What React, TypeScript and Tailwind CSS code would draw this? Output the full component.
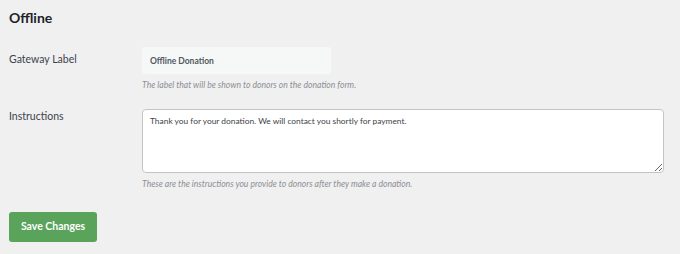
import React from "react";

export default function App() {
  return (
    <div className="min-h-[254px] w-[680px] bg-[#f0f0f1] px-[9px] pt-[9px] font-['Lato',sans-serif] text-[#3c434a]">
      <h2 className="text-[14px] leading-[18px] font-bold text-[#1d2327]">Offline</h2>

      <div className="mt-[20px] grid grid-cols-[133px_1fr]">
        {/* Gateway Label */}
        <label className="pt-[5px] text-[10.5px] leading-[14px]">Gateway Label</label>
        <div>
          <input
            readOnly
            value="Offline Donation"
            className="block h-[27px] w-[189px] rounded-[3px] bg-[#f6f7f7] px-[8px] text-[8.5px] font-bold text-[#50575e] outline-none"
          />
          <p className="mt-[5px] text-[8.6px] leading-[12px] italic text-[#8c8f94]">
            The label that will be shown to donors on the donation form.
          </p>
        </div>

        {/* Instructions */}
        <label className="mt-[18px] text-[10.5px] leading-[14px]">Instructions</label>
        <div className="mt-[18px]">
          <textarea
            readOnly
            defaultValue="Thank you for your donation. We will contact you shortly for payment."
            className="block h-[64px] w-[522px] rounded-[4px] border border-[#c3c4c7] bg-white px-[7px] pt-[4px] pb-[6px] text-[8.4px] leading-[14px] text-[#3c434a] outline-none"
          />
          <p className="mt-[5px] text-[8.6px] leading-[12px] italic text-[#8c8f94]">
            These are the instructions you provide to donors after they make a donation.
          </p>
        </div>
      </div>

      <button className="mt-[22px] h-[30px] w-[88px] rounded-[3px] bg-[#59a35a] text-[10.5px] font-bold text-white">
        Save Changes
      </button>
    </div>
  );
}
